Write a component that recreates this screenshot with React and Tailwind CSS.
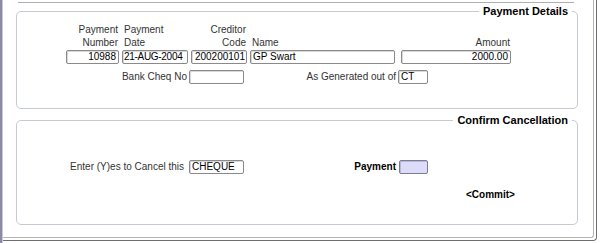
const fieldBase =
  'h-[14px] border border-[#8a8a8a] rounded-[2px] bg-white text-[10px] leading-[12px] text-black shadow-[inset_1px_1px_0_#d8d8d8] whitespace-nowrap overflow-hidden'

function Field({ value = '', width, right = false, className = 'px-[2px]' }) {
  return (
    <div className={`${fieldBase} ${right ? 'text-right' : 'text-left'} ${className}`} style={{ width }}>
      {value}
    </div>
  )
}

function Frame({ title, height, children }) {
  return (
    <div className="relative ml-[13px] w-[562px] border border-[#c6cad2] rounded-[5px]" style={{ height }}>
      <div className="absolute -top-[7px] right-[5px] bg-white px-[4px] text-[11px] leading-[13px] font-bold text-black">
        {title}
      </div>
      {children}
    </div>
  )
}

function Column({ top, bottom, align = 'left', ml, width, value, right, fieldClass }) {
  return (
    <div className="flex flex-col gap-px" style={{ marginLeft: ml }}>
      <div className={`text-[10px] leading-[13px] text-[#333] ${align === 'right' ? 'text-right pr-px' : 'text-left pl-[2px]'}`}>
        <div className="h-[13px]">{top}</div>
        <div className="h-[13px]">{bottom}</div>
      </div>
      <Field value={value} width={width} right={right} className={fieldClass} />
    </div>
  )
}

export default function App() {
  return (
    <div className="w-[600px] h-[243px] bg-white flex font-['Liberation_Sans',Arial,sans-serif] overflow-hidden">
      <div className="w-[2px] bg-[#8a8aa6]" />
      <div className="w-px bg-[#c8c8d8]" />
      <div className="w-[594px] h-[241px] border-r border-b border-[#6e6e6e] rounded-br-[4px]">
        <div className="w-[591px] h-[238px] border-r border-b border-[#b4b4b4] rounded-br-[3px] flex flex-col">
          <div className="mt-[2px] ml-[15px] w-[556px] h-px bg-[#b0b0b0]" />

          <div className="mt-[8px]">
            <Frame title="Payment Details" height={98}>
              <div className="flex pt-[11px]">
                <Column top="Payment" bottom="Number" align="right" ml={49} width={53} value="10988" right />
                <Column top="Payment" bottom="Date" ml={3} width={66} value="21-AUG-2004" fieldClass="px-px tracking-[-0.3px]" />
                <Column top="Creditor" bottom="Code" align="right" ml={3} width={56} value="200200101" right fieldClass="px-px" />
                <Column top="" bottom="Name" ml={3} width={145} value="GP Swart" />
                <Column top="" bottom="Amount" align="right" ml={6} width={110} value="2000.00" right />
              </div>
              <div className="flex items-center mt-[6px]">
                <div className="w-[172px] text-right pr-[2px] text-[10px] leading-[12px] text-[#333]">Bank Cheq No</div>
                <Field width={55} />
                <div className="w-[154px] text-right pr-[2px] text-[10px] leading-[12px] text-[#333]">As Generated out of</div>
                <Field value="CT" width={30} />
              </div>
            </Frame>
          </div>

          <div className="mt-[11px]">
            <Frame title="Confirm Cancellation" height={105}>
              <div className="flex items-center pt-[39px]">
                <div className="w-[172px] text-right pr-[5px] text-[10px] leading-[12px] text-[#333]">Enter (Y)es to Cancel this</div>
                <Field value="CHEQUE" width={55} />
                <div className="w-[155px] text-right pr-[3px] text-[10px] leading-[12px] font-bold text-black">Payment</div>
                <div className="w-[29px] h-[14px] border border-[#7c7c96] rounded-[2px] bg-[#dcdcfa] shadow-[inset_1px_1px_0_#b8b8d0]" />
              </div>
              <div className="ml-[449px] mt-[15px] text-[10px] leading-[12px] font-bold text-black">&lt;Commit&gt;</div>
            </Frame>
          </div>
        </div>
      </div>
    </div>
  )
}
